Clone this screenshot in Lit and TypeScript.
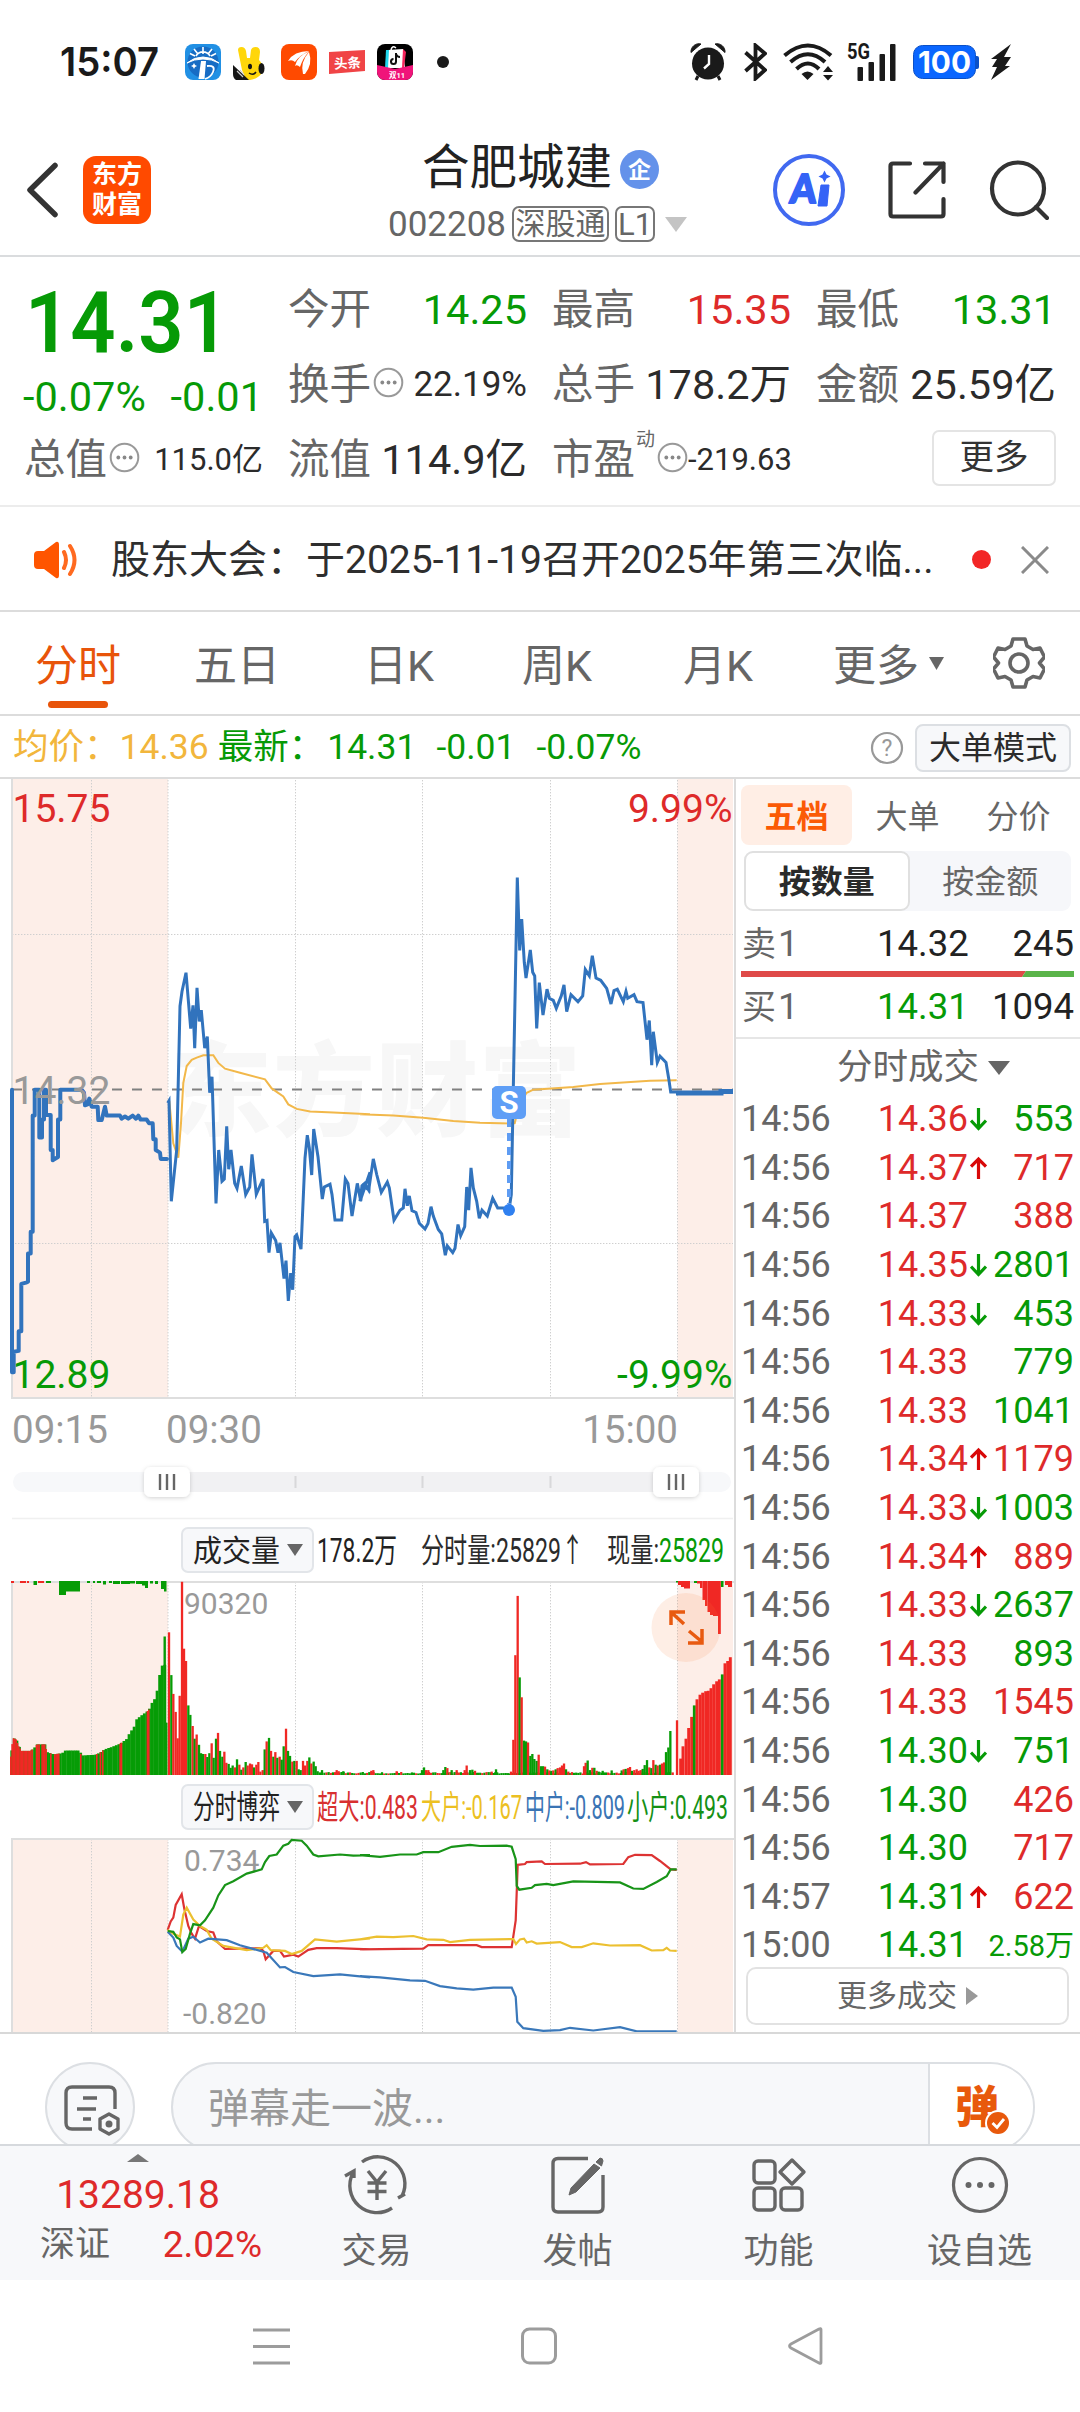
import { LitElement, html, svg, css } from "lit";
import { customElement } from "lit/decorators.js";

type Pts = number[];

/* Turns a flat list of sampled x,y pairs into a path in chart units. */
const line = (pts: Pts, ox: number, oy: number, sy: number) => {
  let d = "";
  for (let i = 0; i < pts.length; i += 2) {
    d += `${i ? "L" : "M"}${(ox + pts[i] / 3).toFixed(1)} ${(oy + pts[i + 1] / sy).toFixed(1)}`;
  }
  return d;
};

/* ---- price chart: origin is the chart's top-left ---- */
const PRE = [36,715,36,1348,41,1348,41,1302,56,1300,56,1256,64,1256,64,1150,78,1147,84,1145,84,1082,92,1082,92,1033,98,1033,98,773,104,773,104,715,118,715,118,822,126,822,126,782,132,782,132,715,138,715,138,772,152,772,152,850,158,850,158,873,174,866,174,782,181,782,181,715,245,715,252,722,255,750,263,748,268,735,275,753,293,753,295,783,305,783,315,753,320,773,360,773,365,780,375,775,385,780,398,773,408,780,415,773,422,782,440,782,447,790,458,790,460,826,467,826,467,850,480,856,482,870,501,870];
const DAY_A = [503,745,507,740,514,965,530,850,540,528,546,495,558,453,572,578,579,526,584,622,591,487,598,562,604,537,614,622,622,596,629,722,636,686,648,970,656,850,666,920,673,915,680,797,686,893,693,850,704,925,711,936,724,886,737,950,749,933,756,860,769,949,789,915,794,1010,801,1008,807,1080,814,1036,827,1053,834,1080,840,1058,852,1138,858,1098,865,1188,872,1126,878,1163,885,1044,890,1040,903,1072,915,868,922,817,928,845,935,906,941,803,954,865,967,960,973,933,990,927,996,950,1005,1007,1025,1007,1036,915,1044,925,1056,998,1072,925,1082,964,1090,930,1107,940,1110,900];
const DAY_B = [0,965,6,930,14,925,26,940,40,870,50,905,64,945,82,922,88,935,102,1007,120,985,130,980,135,937,142,975,148,953,156,986,168,990,178,1014,195,1027,204,1015,213,977,220,998,235,1028,245,1038,256,1086,262,1065,278,1080,285,1070,294,1017,302,1042,314,1022,320,933,326,985,333,890,340,935,350,965,358,1003,366,985,382,998,398,958,413,980,430,980,446,988,454,950,472,240,479,403,485,333,493,430,498,465,511,402,518,452,524,460,530,578,538,475,549,548,561,490,568,510,580,515,589,533,604,505,612,480,620,540,633,502,654,518,668,505,676,446,688,460,697,415,708,465,722,470,740,488,753,523,762,493,772,490,790,518,798,495,803,510,822,502,831,518,849,520,861,603,868,560,875,660,880,585,892,654,900,640,918,654,926,690,932,720,948,720];
const AVG_A = [508,740,520,835,535,867,543,790,550,700,560,662,575,648,590,643,610,638,640,638,655,655,675,668,720,677,795,692,815,712,850,730,865,748,890,758,930,764,1000,766,1110,770];
const AVG_B = [0,770,100,773,190,778,280,785,360,789,450,791,464,790,474,760,485,738,500,722,520,715,640,709,720,702,870,695,950,694];

/* ---- net-flow chart ---- */
const SMALL_A = [503,1283,520,1285,530,1300,540,1305,547,1338,557,1330,570,1290,580,1265,600,1268,615,1255,640,1222,655,1190,675,1163,700,1153,740,1133,785,1122,795,1103,808,1087,830,1083,850,1060,865,1055,875,1045,905,1047,920,1060,940,1083,955,1088,1020,1083,1060,1086,1110,1085];
const SMALL_B = [0,1085,60,1089,120,1083,170,1083,190,1077,235,1077,275,1063,330,1058,360,1061,440,1060,455,1063,467,1095,470,1165,478,1175,515,1170,525,1163,560,1160,580,1163,640,1153,780,1156,820,1172,850,1173,890,1155,920,1140,932,1122,950,1122];
const HUGE_A = [503,1280,512,1258,520,1248,527,1215,545,1187,553,1225,565,1270,575,1290,585,1303,597,1270,620,1283,640,1287,650,1310,675,1330,780,1328,790,1335,797,1357,820,1335,840,1335,852,1350,880,1345,895,1350,925,1332,950,1328,1010,1328,1110,1331];
const HUGE_B = [0,1331,190,1329,205,1320,350,1320,365,1325,455,1325,467,1255,473,1110,495,1108,500,1103,545,1101,555,1108,660,1107,678,1103,690,1109,790,1108,805,1090,825,1084,875,1085,900,1100,932,1122,950,1123];
const BIG_A = [503,1280,520,1290,540,1297,550,1240,560,1222,580,1253,600,1270,620,1280,635,1303,670,1322,740,1333,790,1327,800,1320,812,1333,855,1335,875,1343,905,1335,945,1305,1010,1311,1110,1302];
const BIG_B = [0,1305,50,1298,100,1299,160,1296,200,1305,250,1306,270,1312,330,1306,460,1304,468,1317,480,1305,492,1303,500,1313,515,1310,530,1316,600,1312,635,1325,665,1325,700,1315,750,1321,840,1320,875,1334,910,1333,920,1327,930,1334,950,1335];
const MID_A = [503,1285,520,1300,530,1322,547,1337,565,1303,580,1298,600,1313,625,1303,680,1307,720,1320,800,1340,840,1378,855,1377,880,1390,940,1401,1020,1396,1110,1404];
const MID_B = [0,1401,60,1404,150,1412,195,1413,240,1427,290,1433,340,1436,400,1431,455,1431,467,1455,472,1520,490,1537,550,1544,600,1542,630,1536,700,1543,780,1534,830,1545,950,1545];

/* ---- volume bars: [x, top, 1 = up | 0 = down] ---- */
const PRE_TOP = [31,835,38,778,48,782,56,800,64,812,90,812,100,806,110,795,135,795,140,815,160,821,185,818,195,811,238,811,244,824,285,822,300,816,312,808,330,803,360,793,380,780,388,764,400,752,408,730,425,718,445,706,455,686,463,676,470,655,478,612,486,587];
const RED_RANGES = [[30,98],[107,116],[124,138],[150,154],[162,178],[240,244],[288,292],[299,303],[306,310],[358,364],[440,448]];
const V_A: [number, number, number][] = [[507,502,1],[514,614,0],[520,663,1],[527,710,1],[533,779,1],[539,668,1],[546,370,1],[552,545,1],[558,577,1],[565,693,0],[571,718,0],[578,747,1],[584,780,0],[590,769,1],[597,796,0],[603,818,0],[609,820,0],[616,820,1],[622,828,0],[628,818,0],[635,792,1],[641,830,0],[648,780,0],[654,765,1],[660,812,0],[667,827,0],[673,814,1],[679,843,1],[686,846,0],[692,856,0],[698,850,0],[705,855,1],[711,834,0],[718,848,1],[724,861,0],[730,855,1],[737,841,0],[743,850,1],[750,845,1],[756,847,1],[762,855,0],[769,848,1],[775,841,1],[781,866,1],[788,862,1],[794,808,0],[800,787,1],[807,778,0],[813,812,1],[820,827,0],[826,815,1],[832,830,0],[839,827,1],[845,835,0],[851,800,0],[858,754,1],[864,812,0],[870,825,0],[877,840,1],[883,838,0],[890,838,1],[896,860,0],[902,862,0],[909,838,1],[915,850,1],[922,838,1],[928,829,0],[934,845,1],[941,840,0],[947,852,0],[953,865,0],[960,868,0],[966,862,0],[1010,862,1],[1016,865,1],[1030,865,0]];
const V_B: [number, number, number][] = [[34,864,1],[40,862,1],[110,865,1],[186,862,0],[192,855,0],[198,862,1],[205,862,1],[250,862,0],[256,854,0],[262,857,1],[275,862,0],[290,862,1],[314,862,1],[320,850,1],[330,862,0],[337,861,0],[345,864,1],[395,866,1],[408,860,0],[453,866,1],[460,783,1],[466,562,1],[473,407,1],[479,620,0],[485,672,1],[492,785,0],[498,787,0],[504,790,1],[511,825,0],[517,820,0],[523,833,0],[530,838,0],[536,822,1],[543,852,0],[549,852,0],[555,853,1],[562,860,0],[568,863,1],[574,864,0],[580,863,1],[587,860,0],[593,857,1],[600,855,1],[606,850,1],[612,845,1],[618,860,0],[625,866,1],[672,852,1],[677,843,1],[683,837,0],[690,862,0],[697,856,1],[703,856,0],[710,864,1],[716,866,0],[728,864,0],[755,863,0],[785,863,0],[791,860,1],[797,859,0],[804,857,1],[810,854,1],[816,864,0],[823,862,1],[830,860,1],[836,864,1],[842,862,1],[848,859,0],[854,849,0],[861,836,0],[868,855,1],[874,857,0],[880,836,1],[887,848,0],[893,850,1],[900,848,0],[906,845,1],[912,842,1],[918,815,0],[925,803,0],[931,760,0],[938,868,1],[951,732,1],[961,832,1],[968,800,1],[977,780,1],[985,752,1],[994,723,1],[1002,693,0],[1010,677,1],[1019,665,1],[1027,660,1],[1036,656,1],[1044,655,1],[1052,648,1],[1060,638,1],[1069,630,1],[1077,625,1],[1086,612,0],[1094,583,1],[1102,577,1],[1110,567,1]];
/* order imbalance, hanging from the top edge: [x0, x1, height, up] */
const HANG: [number, number, number, number][] = [[11,14,2,1],[20,26,2,1],[27,29,2,1],[33.5,37,4,0],[38,44,2,1],[46,51,2,0],[59,66,14,0],[66,80,10.5,0],[87,90,2,0],[93,95,2,0],[97,101,2,0],[103,106,3.5,0],[109,112,2,0],[113,120,3,0],[121,130,3,0],[130,135,2.5,0],[136,142,3,0],[142,145,4.5,0],[145,148,7,0],[150,153,2.5,0],[155,158,3,0],[161,164,8,0],[164,166.5,10.5,0],[676,678,1.5,0],[678,681,4,1],[681,684,6,1],[684,690,7.5,1],[694,697,2,0],[697,700,2.5,1],[700,702.5,7,1],[702.5,705,19,1],[705,707.5,25,1],[707.5,710,31,1],[710,713,34,1],[713,718,35,1],[718,720.8,53,1],[721,723.5,6,0],[725,728,4,1],[728,732,6,1]];

const preHeight = (x: number) => {
  for (let i = 2; i < PRE_TOP.length; i += 2) {
    if (x <= PRE_TOP[i]) {
      const t = (x - PRE_TOP[i - 2]) / (PRE_TOP[i] - PRE_TOP[i - 2]);
      return PRE_TOP[i - 1] + t * (PRE_TOP[i + 1] - PRE_TOP[i - 1]);
    }
  }
  return 587;
};

const bar = (x: number, w: number, top: number, up: boolean | number) => {
  const y = (top - 368) / 2.613;
  return svg`<rect x=${x.toFixed(2)} y=${y.toFixed(1)} width=${w} height=${(194 - y).toFixed(1)} fill=${up ? "#f02824" : "#069c06"}></rect>`;
};

const fit = (text: string, w: number, size: number, fill: string, weight = 400) => html`<svg class="fit" width=${w} height=${Math.round(size * 1.3)}><text x="0" y=${(size * 1.005).toFixed(1)} font-size=${size} fill=${fill} font-weight=${weight} textLength=${w} lengthAdjust="spacingAndGlyphs">${text}</text></svg>`;

const GREEN = "#069a06";
const RED = "#de2a2a";

const TRADES: [string, string, number, string, string, number][] = [
  ["14:56", "14.36", 1, "d", "553", 0],
  ["14:56", "14.37", 1, "u", "717", 1],
  ["14:56", "14.37", 1, "", "388", 1],
  ["14:56", "14.35", 1, "d", "2801", 0],
  ["14:56", "14.33", 1, "d", "453", 0],
  ["14:56", "14.33", 1, "", "779", 0],
  ["14:56", "14.33", 1, "", "1041", 0],
  ["14:56", "14.34", 1, "u", "1179", 1],
  ["14:56", "14.33", 1, "d", "1003", 0],
  ["14:56", "14.34", 1, "u", "889", 1],
  ["14:56", "14.33", 1, "d", "2637", 0],
  ["14:56", "14.33", 1, "", "893", 0],
  ["14:56", "14.33", 1, "", "1545", 1],
  ["14:56", "14.30", 0, "d", "751", 0],
  ["14:56", "14.30", 0, "", "426", 1],
  ["14:56", "14.30", 0, "", "717", 1],
  ["14:57", "14.31", 0, "u", "622", 1],
  ["15:00", "14.31", 0, "", "2.58万", 0],
];

const arrow = (dir: string) =>
  dir === "d"
    ? html`<svg width="17" height="24" viewBox="0 0 17 24"><path d="M8.5 1V21M1 13.5L8.5 21.5L16 13.5" fill="none" stroke="#069a06" stroke-width="3.2"/></svg>`
    : dir === "u"
    ? html`<svg width="17" height="24" viewBox="0 0 17 24"><path d="M8.5 23V3M1 10.5L8.5 3L16 10.5" fill="none" stroke="#d80808" stroke-width="3.2"/></svg>`
    : "";

const dots = html`<svg class="dots" width="31" height="31" viewBox="0 0 31 31"><circle cx="15.5" cy="15.5" r="13.8" fill="none" stroke="#999" stroke-width="2"/><g fill="#888"><circle cx="9.3" cy="15.5" r="1.9"/><circle cx="15.5" cy="15.5" r="1.9"/><circle cx="21.7" cy="15.5" r="1.9"/></g></svg>`;

const grid = (h: number) => svg`<g stroke="#cfcfcf" stroke-width="1" stroke-dasharray="1.4 1.6">
  ${[91.5, 168, 295.5, 422.5, 550.5, 677.5].map((x) => svg`<line x1=${x} x2=${x} y1="1" y2=${h}></line>`)}</g>`;

@customElement("app-root")
export class AppRoot extends LitElement {
  static styles = css`
    :host { display: block; width: 1080px; height: 2412px; overflow: hidden; background: #fff; color: #333;
      font-family: Roboto, "Noto Sans CJK SC", sans-serif; font-size: 36px; line-height: 1; }
    * { box-sizing: border-box; }
    svg { display: block; flex: none; }
    .fit, .over { overflow: visible; }
    .page { display: flex; flex-direction: column; height: 2412px; }
    .page > * { flex: none; }
    .row { display: flex; align-items: center; white-space: nowrap; }
    .g { color: #069a06; } .r { color: #de2a2a; }

    .status { height: 124px; padding: 0 68px 0 60px; }
    .clock { width: 125px; font: 600 41px/1 Inter, Roboto, sans-serif; color: #1a1a1a; }
    .apps { gap: 12px; }
    .sys { margin-left: auto; }
    .head { height: 133px; border-bottom: 2px solid #dadcde; padding-left: 26px; }
    .logo { margin-left: 25px; width: 68px; height: 68px; border-radius: 13px; background: #ff4a00; color: #fff;
      font-size: 25px; font-weight: 700; line-height: 30px; text-align: center; padding-top: 4px; white-space: normal; }
    .titles { width: 350px; margin: 9px 0 0 212px; display: flex; flex-direction: column; }
    .name { height: 58px; padding-left: 59px; font-size: 47.5px; color: #222; }
    .code { height: 50px; padding: 2px 0 0 25px; color: #666; font-size: 35px; }
    .tag { border: 2px solid #777; border-radius: 7px; height: 36px; margin-left: 6px; display: flex; align-items: center; justify-content: center; font-size: 30px; }
    .t1 { width: 97px; } .t2 { width: 40px; font-size: 31px; }
    .tri { width: 0; height: 0; border: 11px solid transparent; border-top: 15px solid #c4c4c4; border-bottom: 0; margin-left: 10px; }
    .headicons { margin-left: 60px; gap: 43px; }

    .quote { height: 250px; padding: 15px 0 0 24px; border-bottom: 2px solid #ececec;
      display: grid; grid-template-columns: 239px 239px 239px 240px; column-gap: 25px; grid-template-rows: 75px 75px 75px; }
    .big { grid-row: 1 / 3; display: flex; flex-direction: column; }
    .price { height: 98px; padding: 2px 0 0 1px; }
    .chg { height: 52px; font-size: 41.5px; display: flex; align-items: center; justify-content: space-between; padding-top: 1px; }
    .chg span:first-child { margin-left: -1px; }
    .cell { display: flex; align-items: center; font-size: 41.5px; white-space: nowrap; }
    .cell .k { color: #666; }
    .cell .v { margin-left: auto; color: #2b2b2b; }
    .cell .v.g { color: #069a06; } .cell .v.r { color: #de2a2a; }
    .v.s { font-size: 35px; } .v.xs { font-size: 31px; }
    .dots { margin: -5px 0 0 2px; }
    .sup { font-size: 19px; color: #666; margin: -40px 0 0 1px; }
    .more { margin: -4px 0 0 auto; width: 124px; height: 56px; border: 2px solid #e4e4e4; border-radius: 7px; font-size: 34.5px; color: #333; display: flex; align-items: center; justify-content: center; }

    .notice { height: 105px; border-bottom: 2px solid #dcdcdc; padding: 2px 0 0 33px; color: #2e2e2e; font-size: 39px; }
    .notice .msg { margin-left: 32px; width: 861px; padding-top: 1px; }
    .reddot { width: 19px; height: 19px; border-radius: 50%; background: #f22626; }
    .close { margin-left: 30px; }

    .tabs { height: 104px; border-bottom: 2px solid #dcdcdc; color: #666; font-size: 43px; padding-left: 35px; }
    .tab { display: flex; flex-direction: column; align-items: center; height: 102px; padding-top: 33px; flex: none; }
    .tab.on { color: #e8540a; width: 86px; }
    .tab i { width: 60px; height: 7px; border-radius: 4px; background: #e8540a; margin-top: 13px; }

    .avg { height: 63px; border-bottom: 2px solid #dcdcdc; font-size: 35.5px; padding: 2px 9px 0 13px; }
    .avg .y { color: #f2b63c; }
    .avg .n { margin-left: 9px; } .avg .p { margin-left: 3px; } .avg .q { margin-left: 20px; }
    .avg .q + .q { margin-left: 21px; }
    .help { margin-left: auto; }
    .mode { width: 156px; height: 48px; border: 2px solid #dcdfe3; border-radius: 8px; background: #f7f8fa; color: #2b2b2b; font-size: 32px; display: flex; align-items: center; justify-content: center; margin-left: 11px; }

    .main { display: flex; height: 1255px; border-bottom: 2px solid #d8d8d8; overflow: hidden; }
    .left { width: 734px; display: flex; flex-direction: column; }
    .left > * { flex: none; }
    .strip { height: 62px; padding-left: 181px; }
    .ind { width: 133px; height: 46px; border: 2px solid #e2e5e9; border-radius: 7px; background: #f7f8fa; display: flex; align-items: center; justify-content: space-between; padding: 0 9px 0 10px; }
    .ind b { border: 8px solid transparent; border-top: 12px solid #666; border-bottom: 0; }
    .s3 { margin-left: 3px; } .s2 { margin-left: 2px; } .s24 { margin-left: 24px; }

    .right { width: 346px; border-left: 2px solid #dcdcdc; display: flex; flex-direction: column; }
    .right > * { flex: none; }
    .rtabs { height: 66px; margin: 6px 0 0 5px; align-items: flex-start; font-size: 32px; color: #666; }
    .rtabs span { width: 111px; height: 60px; border-radius: 8px; display: flex; align-items: center; justify-content: center; padding-top: 3px; }
    .rtabs .on { background: #ffeee5; color: #fb5a06; font-weight: 700; }
    .seg { width: 327px; height: 60px; margin-left: 8px; background: #f6f7fa; border-radius: 9px; font-size: 32px; color: #666; }
    .seg span { flex: 1; height: 60px; display: flex; align-items: center; justify-content: center; padding-top: 2px; }
    .seg .on { border: 2px solid #e0e0e0; border-radius: 9px; background: #fff; color: #2a2a2a; font-weight: 700; }
    .lvl { height: 60px; padding: 0 6px; font-size: 36.5px; color: #222; }
    .lvl.sell { height: 56px; margin-top: 4px; padding-top: 2px; }
    .lvl .k { width: 135px; color: #666; }
    .lvl .v { margin-left: auto; }
    .lvl .g { color: #069a06; }
    .lvl .k em { font-style: normal; font-size: 34px; margin-right: 2px; }
    .rt { height: 58px; border-top: 2px solid #e6e6e6; font-size: 35.5px; color: #666; gap: 9px; padding: 2px 0 0 101px; }
    .rt b { border: 11px solid transparent; border-top: 14px solid #666; border-bottom: 0; }
    .tr { height: 48.6px; padding: 0 6px 0 5px; font-size: 36px; color: #666; }
    .tr .p { margin-left: 47px; width: 92px; }
    .tr .v { margin-left: auto; }
    .tr .w { font-size: 29px; padding-top: 3px; }
    .all { width: 323px; height: 58px; margin: -3px 0 0 10px; border: 2px solid #e2e2e2; border-radius: 10px; font-size: 30px; color: #666; display: flex; align-items: center; justify-content: center; gap: 9px; padding-top: 1px; }
    .all b { border: 9px solid transparent; border-left: 12px solid #999; border-right: 0; }

    .danmu { height: 110px; padding: 28px 0 0 45px; overflow: hidden; display: flex; align-items: flex-start; }
    .round { width: 90px; height: 90px; border: 2px solid #dcdfe3; border-radius: 50%; background: #f7f8fa; padding: 19px 0 0 17px; flex: none; }
    .pill { margin-left: 36px; width: 864px; height: 90px; border: 2px solid #dcdfe3; border-radius: 45px; overflow: hidden; background: #f7f8fa; display: flex; align-items: center; color: #999; font-size: 41px; flex: none; }
    .pill .in { width: 755px; padding: 5px 0 0 35px; }
    .pill .send { flex: 1; height: 90px; background: #fff; border-left: 2px solid #dcdfe3; padding: 21px 0 0 25px; }

    .dock { height: 136px; background: #f7f8fa; border-top: 2px solid #d6d9dd; display: flex; }
    .idx { width: 276px; display: flex; flex-direction: column; align-items: center; padding-top: 8px; color: #666; }
    .idx b { border: 11px solid transparent; border-bottom: 8px solid #777; border-top: 0; }
    .idx .n { font-size: 39px; color: #de2a2a; margin-top: 14px; }
    .idx .l { width: 222px; display: flex; justify-content: space-between; align-items: center; font-size: 35px; margin: 11px 0 0 26px; }
    .idx .l .r { font-size: 37px; }
    .item { width: 201px; display: flex; flex-direction: column; align-items: center; color: #666; font-size: 35px; padding-top: 8px; gap: 18px; }
    .nav { height: 132px; justify-content: center; gap: 231px; padding-right: 4px; }
    .m10 { margin-left: 10px; } .m14 { margin-left: 14px; } .m16 { margin-left: 16px; } .m17 { margin-left: 17px; } .m18 { margin-left: 18px; } .m8 { margin-left: 8px; }
    .m24 { margin-left: 24px; } .m72 { margin-left: 73px; } .m83 { margin-left: 84px; } .m86 { margin-left: 88px; } .m89 { margin-left: 91px; } .m77 { margin-left: 80px; } .m49 { margin-left: 49px; } .m26 { margin-left: 23px; }
  `;

  private status() {
    const k = "#1a1a1a";
    return html`<div class="row status">
      <div class="clock">${fit("15:07", 99, 40, k, 600)}</div>
      <div class="row apps">
        <svg width="36" height="36" viewBox="0 0 36 36"><rect width="36" height="36" rx="8" fill="#2190e4"/><circle cx="18" cy="18" r="15.5" fill="#176cc4"/><path d="M2 19Q9 13 18 13T34 19Q27 15 18 15T2 19Z" fill="#fff" stroke="#fff"/><path d="M11 12a8 8 0 0 1 14 0M18 10V3M13 10L9 5M23 10L27 5M10 12L5 9.500M26 12L31 9.500" fill="none" stroke="#fff" stroke-width="1.600"/><path d="M16 17H21L19.500 35H13.500Z" fill="#fff"/><path d="M22 22Q31 21 28 28Q26 33 20 35" fill="none" stroke="#fff" stroke-width="1.800"/><path d="M9 19L10 21L12 22L10 23L9 25L8 23L6 22L8 21Z" fill="#fff"/></svg>
        <svg width="36" height="36" viewBox="0 0 36 36"><path d="M5 6Q5 3 8.500 3Q12 3 13 7L14 14H17L18 6Q19 3 22.500 3Q27 3 27 8L26 16Q31 21 30 27Q26 35 17 36H13L9 26Z" fill="#ffd60a"/><path d="M0 21L16 36H3Q0 34 0 30Z" fill="#161616"/><ellipse cx="28.500" cy="24.500" rx="3" ry="5.500" fill="#161616"/><ellipse cx="17" cy="22.500" rx="2" ry="2.800" fill="#161616"/><path d="M16 29Q20 32 23 28" fill="none" stroke="#161616" stroke-width="1.500"/><path d="M4 27L10 33M7 26L11 31" stroke="#ccc" stroke-width="1.200"/></svg>
        <svg width="36" height="36" viewBox="0 0 36 36"><rect width="36" height="36" rx="8" fill="#ff4a00"/><path d="M7 17Q13 7 28 7Q19 11 14 18Q11 15 7 17Z M14 22Q16 12 28 7.500Q22 14 19 23Q16 20 14 22Z M22 30Q19 18 28 8Q32 20 24 30Z" fill="#fff"/></svg>
        <svg width="36" height="36" viewBox="0 0 36 36"><path d="M0 8L36 6V27L0 30Z" fill="#f04446"/><text x="5" y="24" font-size="13.500" font-weight="700" fill="#fff" transform="rotate(-3 18 18)">头条</text></svg>
        <svg width="36" height="36" viewBox="0 0 36 36"><defs><clipPath id="c"><rect width="36" height="36" rx="8"/></clipPath></defs><g clip-path="url(#c)"><rect width="36" height="36" fill="#000"/><path d="M11 6L26 5L28 24H9Z" fill="#fff"/><path d="M9 6L12 6L11 24H8Z" fill="#20d5ec"/><path d="M26 5L29 8L27 24H25Z" fill="#f5245c"/><path d="M14 6Q15 1 19 4" fill="none" stroke="#fff" stroke-width="1.500"/><path d="M19 9V17.500A2.500 2.500 0 1 1 16.500 15M19 10Q20 13 23 13" fill="none" stroke="#111" stroke-width="2"/><path d="M0 21L18 25L36 21V36H0Z" fill="#f0147a"/><text x="12" y="34" font-size="7.500" font-weight="700" fill="#fff">双11</text></g></svg>
      </div>
      <svg class="m24" width="12" height="12"><circle cx="6" cy="6" r="6" fill=${k}></circle></svg>
      <div class="row sys">
        <svg width="36" height="38" viewBox="0 0 36 38"><circle cx="18" cy="20.500" r="16" fill=${k}></circle><path d="M1 9.500A8 8 0 0 1 11 1Z M35 9.500A8 8 0 0 0 25 1Z" fill=${k} stroke=${k} stroke-width="1"></path><path d="M8 33L6 37M28 33L30 37" stroke=${k} stroke-width="3"></path><path d="M19 12V21L14 25.500" fill="none" stroke="#fff" stroke-width="2.400"></path></svg>
        <svg class="m18" width="23" height="38" viewBox="0 0 23 38"><path d="M1.500 9.500L21 27L11.500 35.500V2.500L21 10.500L1.500 28" fill="none" stroke=${k} stroke-width="3.800"></path></svg>
        <svg class="m16" width="50" height="38" viewBox="0 0 50 38"><g fill="none" stroke=${k} stroke-width="4"><path d="M1.500 12.500Q25 -7.500 48 12.500"></path><path d="M7.500 19Q25 3.500 42 19"></path><path d="M13.500 26Q25 15 36 26"></path></g><path d="M18.500 31Q24.500 26 30.500 31L24.500 37Z" fill=${k}></path><path d="M40 29L45 23L50 29ZM40 32H50L45 37.500Z" fill=${k}></path></svg>
        <svg class="m14 over" width="49" height="38" viewBox="0 0 49 38"><text x="0" y="16" font-size="21.500" font-weight="700" fill=${k} textLength="23" lengthAdjust="spacingAndGlyphs">5G</text><g fill=${k}><rect x="10.500" y="24" width="5.500" height="14" rx="1"></rect><rect x="21.500" y="19" width="5.500" height="19" rx="1"></rect><rect x="32.500" y="11" width="5.500" height="27" rx="1"></rect><rect x="43" y="1" width="5.500" height="37" rx="1"></rect></g></svg>
        <svg class="m17" width="67" height="36" viewBox="0 0 67 36"><rect x="60" y="12" width="6" height="13" rx="2" fill="#0a50c8"/><rect x="0.500" y="1.500" width="62" height="33" rx="9" fill="#0a66ff" stroke="#0a50c8"/><text x="5" y="28.700" font-family="Inter, Roboto" font-size="30.500" font-weight="700" fill="#fff" textLength="53" lengthAdjust="spacingAndGlyphs">100</text></svg>
        <svg class="m10" width="22" height="38" viewBox="0 0 22 38"><path d="M21 1L1 16H7L2 24L7 24L1 37L20 23H15L21 14L14 14Z" fill=${k}></path></svg>
      </div>
    </div>`;
  }

  private header() {
    return html`<div class="row head">
      <svg width="32" height="56" viewBox="0 0 32 56"><path d="M29 3.500L4 28L29 52.500" fill="none" stroke="#333" stroke-width="5.500" stroke-linecap="round" stroke-linejoin="round"/></svg>
      <div class="logo">东方<br>财富</div>
      <div class="titles">
        <div class="row name"><span>合肥城建</span>
          <svg class="m8" width="39" height="39" viewBox="0 0 39 39"><circle cx="19.500" cy="19.500" r="19.500" fill="#6492ea"/><text x="8" y="27.500" font-size="23" font-weight="700" fill="#fff">企</text></svg></div>
        <div class="row code"><span>002208</span><span class="tag t1">深股通</span><span class="tag t2">L1</span><span class="tri"></span></div>
      </div>
      <div class="row headicons">
        <svg width="72" height="72" viewBox="0 0 72 72"><circle cx="36" cy="36" r="34" fill="#fff" stroke="#4169f0" stroke-width="4"/><path d="M48 31H56L54 52H45Z" fill="#3563f6" stroke="#3563f6" stroke-linejoin="round"/><path d="M51.500 16.500L53.500 20.500L57.500 22.500L53.500 24.500L51.500 28.500L49.500 24.500L45.500 22.500L49.500 20.500Z" fill="#3563f6"/><text x="17" y="49" font-size="40" font-family="Lato, Roboto" font-weight="900" fill="#3563f6" stroke="#3563f6" stroke-width="2" stroke-linejoin="round" textLength="26" lengthAdjust="spacingAndGlyphs" transform="translate(3.500 0) skewX(-5)">A</text></svg>
        <svg width="58" height="58" viewBox="0 0 58 58"><g fill="none" stroke="#333" stroke-width="4.200" stroke-linecap="round" stroke-linejoin="round"><path d="M22 2.500H5Q2.500 2.500 2.500 5V53Q2.500 55.500 5 55.500H53Q55.500 55.500 55.500 53V38"/><path d="M37 2.500H55.500V21M55.500 2.500L27.500 31.500"/></g></svg>
        <svg width="60" height="60" viewBox="0 0 60 60"><g fill="none" stroke="#333" stroke-width="4.200" stroke-linecap="round"><circle cx="29" cy="28.500" r="26"/><path d="M47 47L58 58"/></g></svg>
      </div>
    </div>`;
  }

  private quote() {
    const cell = (k: string, v: string, c = "", extra: unknown = "") =>
      html`<div class="cell"><span class="k">${k}</span>${extra}<span class="v ${c}">${v}</span></div>`;
    return html`<div class="quote">
      <div class="big"><div class="row price">${fit("14.31", 204, 86, "#069a06", 600)}</div><div class="chg g"><span>-0.07%</span><span>-0.01</span></div></div>
      ${cell("今开", "14.25", "g")}${cell("最高", "15.35", "r")}${cell("最低", "13.31", "g")}
      ${cell("换手", "22.19%", "s", dots)}${cell("总手", "178.2万")}${cell("金额", "25.59亿")}
      ${cell("总值", "115.0亿", "xs", dots)}${cell("流值", "114.9亿")}
      ${cell("市盈", "-219.63", "xs", html`<span class="sup">动</span>${dots}`)}
      <div class="cell"><span class="more">更多</span></div>
    </div>`;
  }

  private bars() {
    const out: unknown[] = [];
    for (let x = 31; x < 490; x += 7.65) {
      out.push(bar(x / 3, 2.9, preHeight(x + 3), 0));
    }
    for (const [a, b] of RED_RANGES) {
      for (let x = a; x < b; x += 4) out.push(bar(x / 3, 1.6, preHeight(x + 2), 1));
    }
    out.push(bar(163.5, 2.4, 513, 0), bar(166, 1.5, 738, 0));
    for (let x = 970; x < 2010; x += 6.4) {
      const n = Math.abs(Math.sin(x * 12.9898) * 43758.5453) % 1;
      out.push(bar(x / 3, 2.2, 871 - n * 4, Math.floor(n * 97) % 5 < 2 ? 1 : 0));
    }
    for (const [x, t, c] of V_A) out.push(bar((x - 3.4) / 3, 2.3, t, c));
    for (const [x, t, c] of V_B) out.push(bar(360 + (x - 3.4) / 3, x > 955 ? 2.9 : 2.3, t, c));
    return out;
  }

  private charts() {
    const y0 = -8.5, s = 2.24;
    const flow = (a: Pts, b: Pts, c: string) => svg`<path d=${line(a, 0, -398, 2.613) + line(b, 360, -398, 2.613).replace("M", "L")} fill="none" stroke=${c} stroke-width="2.2"></path>`;
    return html`<div class="left">
      <svg width="734" height="690" viewBox="0 0 734 690">
        <rect x="12" y="0" width="156" height="619" fill="#fdeee8"/><rect x="677.500" y="0" width="55.500" height="619" fill="#fdeee8"/>
        <text x="170" y="349" font-size="102" font-weight="900" fill="#f7f7f7" textLength="411">东方财富</text>
        ${grid(619)}
        <path d="M12 155.500H733M12 464.500H733" stroke="#cfcfcf" stroke-dasharray="1.400 1.600"/>
        <path d="M12 0V619M11 619H734" fill="none" stroke="#dedede" stroke-width="2"/>
        <path d="M12 310.500H733" stroke="#808080" stroke-width="2" stroke-dasharray="10 10" />
        <g font-size="39"><text x="12.500" y="42.500" fill=${RED}>15.75</text><text x="12.500" y="608.500" fill=${GREEN}>12.89</text>
          <text x="732.500" y="42.500" fill=${RED} text-anchor="end">9.99%</text><text x="732.500" y="608.500" fill=${GREEN} text-anchor="end">-9.99%</text></g>
        <path d=${line(AVG_A, 0, y0, s) + line(AVG_B, 360, y0, s).replace("M", "L")} fill="none" stroke="#f2b84a" stroke-width="2"></path>
        <path d=${line(PRE, 0, y0, s)} fill="none" stroke="#3173bd" stroke-width="4" stroke-linecap="round" stroke-linejoin="round"></path>
        <path d=${line(DAY_A, 0, y0, s) + line(DAY_B, 360, y0, s).replace("M", "L")} fill="none" stroke="#3173bd" stroke-width="3"></path>
        <path d="M676 314H721V312.500H733" fill="none" stroke="#3173bd" stroke-width="5"/>
        <text x="12.500" y="325" font-size="39" fill="#999">14.32</text>
        <path d="M509 340V425" stroke="#5e9cf3" stroke-width="4" stroke-dasharray="8 6"/><circle cx="509" cy="431" r="6" fill="#2f80f0"/>
        <rect x="492" y="307" width="34" height="33" rx="5" fill="#5e9ef6"/><text x="509" y="334" font-size="31" font-weight="700" fill="#fff" text-anchor="middle">S</text>
        <g font-size="38.500" fill="#999"><text x="12" y="664">09:15</text><text x="166" y="664">09:30</text><text x="678" y="664" text-anchor="end">15:00</text></g>
      </svg>
      <svg class="over" width="734" height="50" viewBox="0 0 734 50">
        <defs><filter id="sh" x="-20%" y="-20%" width="140%" height="150%"><feDropShadow dx="0" dy="1" stdDeviation="2" flood-color="#000" flood-opacity=".18"/></filter></defs>
        <rect x="13" y="3" width="718" height="20" rx="10" fill="#f7f8fa"/><rect x="168" y="3" width="508" height="20" fill="#f1f1f3"/>
        <path d="M295.500 7V19M422.500 7V19M550.500 7V19" stroke="#d8d8da" stroke-width="2"/>
        ${[144, 653].map((x) => svg`<rect x=${x} y="-2" width="46" height="30" rx="7" fill="#fff" filter="url(#sh)"></rect><path d=${`M${x + 16} 5V21M${x + 23} 5V21M${x + 30} 5V21`} stroke="#666" stroke-width="2.4"></path>`)}
        <path d="M12 49.500H733" stroke="#f0f0f0" stroke-width="1.500"/>
      </svg>
      <div class="row strip">
        <span class="ind">${fit("成交量", 87, 30, "#222")}<b></b></span>
        <span class="s3">${fit("178.2万", 80, 32.5, "#222")}</span>
        <span class="s24">${fit("分时量:25829↑", 163, 32.5, "#2b2b2b")}</span>
        <span class="m26">${fit("现量:", 52, 32.5, "#2b2b2b")}</span>${fit("25829", 65, 32.5, GREEN)}
      </div>
      <svg width="734" height="195" viewBox="0 0 734 195">
        <rect x="12" y="0" width="156" height="194" fill="#fdeee8"/><rect x="677.500" y="0" width="55.500" height="194" fill="#fdeee8"/>
        ${grid(194)}
        <path d="M12 194V1H734" fill="none" stroke="#dedede" stroke-width="2"/>
        ${this.bars()}
        ${HANG.map(([a, b, h, u]) => svg`<rect x=${a} y="0" width=${b - a} height=${h} fill=${u ? "#f02824" : "#069c06"}></rect>`)}
        <circle cx="686" cy="46.500" r="34.500" fill="#f97838" fill-opacity=".13"/>
        <path d="M684 43L672 32M671 44V31H685M689 50L701 60M702 48V62H688" fill="none" stroke="#e85a10" stroke-width="3.500"/>
        <text x="184" y="33" font-size="30" fill="#999">90320</text>
      </svg>
      <div class="row strip">
        <span class="ind">${fit("分时博弈", 87, 32, "#222")}<b></b></span>
        <span class="s3">${fit("超大:0.483", 101, 32.5, "#d83030")}</span>
        <span class="s3">${fit("大户:-0.167", 101, 32.5, "#ecc022")}</span>
        <span class="s3">${fit("中户:-0.809", 100, 32.5, "#3a74b4")}</span>
        <span class="s2">${fit("小户:0.493", 101, 32.5, "#149014")}</span>
      </div>
      <svg width="734" height="195" viewBox="0 0 734 195">
        <rect x="12" y="0" width="156" height="195" fill="#fdeee8"/><rect x="677.500" y="0" width="55.500" height="195" fill="#fdeee8"/>
        ${grid(195)}
        <path d="M12 195V1H734" fill="none" stroke="#dedede" stroke-width="2"/>
        <g font-size="30" fill="#999"><text x="184" y="33">0.734</text><text x="183" y="186">-0.820</text></g>
        ${flow(HUGE_A, HUGE_B, "#d33")}${flow(BIG_A, BIG_B, "#ecc030")}${flow(MID_A, MID_B, "#3a78ba")}${flow(SMALL_A, SMALL_B, "#189418")}
      </svg>
    </div>`;
  }

  private side() {
    return html`<div class="right">
      <div class="row rtabs"><span class="on">五档</span><span>大单</span><span>分价</span></div>
      <div class="row seg"><span class="on">按数量</span><span>按金额</span></div>
      <div class="row lvl sell"><span class="k"><em>卖</em>1</span><span>14.32</span><span class="v">245</span></div>
      <svg width="339" height="6" viewBox="0 0 339 6"><path d="M5 0H290L286 6H5Z" fill="#df4a48"/><path d="M290 0H338V6H286Z" fill="#5ab44a"/></svg>
      <div class="row lvl"><span class="k"><em>买</em>1</span><span class="g">14.31</span><span class="v">1094</span></div>
      <div class="row rt"><span>分时成交</span><b></b></div>
      ${TRADES.map(([t, p, pu, d, v, vu]) => html`<div class="row tr"><span>${t}</span><span class="p ${pu ? "r" : "g"}">${p}</span>${arrow(d)}<span class="v ${vu ? "r" : "g"} ${v.includes("万") ? "w" : ""}">${v}</span></div>`)}
      <div class="all"><span>更多成交</span><b></b></div>
    </div>`;
  }

  render() {
    return html`<div class="page">
      ${this.status()}${this.header()}${this.quote()}
      <div class="row notice">
        <svg width="46" height="38" viewBox="0 0 46 38"><path d="M1 14Q1 10 5 10H11L23 1Q26 0 26 4V34Q26 38 23 37L11 28H5Q1 28 1 24Z" fill="#ff5500"/><path d="M31 11Q35 19 31 27M37 5Q46 19 37 33" fill="none" stroke="#ff6a20" stroke-width="4" stroke-linecap="round"/></svg>
        <span class="msg">股东大会：于2025-11-19召开2025年第三次临...</span>
        <span class="reddot"></span>
        <svg class="close" width="28" height="28" viewBox="0 0 28 28"><path d="M1 1L27 27M27 1L1 27" stroke="#8a8a8a" stroke-width="3"/></svg>
      </div>
      <div class="row tabs">
        <span class="tab on">分时<i></i></span>
        <span class="tab m72">五日</span>
        <span class="tab m83">日K</span>
        <span class="tab m86">周K</span>
        <span class="tab m89">月K</span>
        <span class="tab m77">更多</span>
        <svg class="m10" width="15" height="13" viewBox="0 0 15 13"><path d="M0 0H15L7.500 13Z" fill="#666"/></svg>
        <svg class="m49" width="52" height="52" viewBox="0 0 52 52"><path d="M20 2H32L34 9L40 12.500L47 11L51.500 20L46.500 26L51.500 32L47 41L40 39.500L34 43L32 50H20L18 43L12 39.500L5 41L.5 32L5.500 26L.5 20L5 11L12 12.500L18 9Z" fill="none" stroke="#666" stroke-width="3.600" stroke-linejoin="round"/><circle cx="26" cy="26" r="9" fill="none" stroke="#666" stroke-width="3.600"/></svg>
      </div>
      <div class="row avg"><span class="y">均价：</span><span class="y">14.36</span><span class="g n">最新：</span><span class="g p">14.31</span><span class="g q">-0.01</span><span class="g q">-0.07%</span>
        <svg class="help" width="34" height="34" viewBox="0 0 34 34"><circle cx="17" cy="17" r="15" fill="none" stroke="#999" stroke-width="2.200"/><text x="17" y="25" font-size="23" fill="#999" text-anchor="middle">?</text></svg>
        <span class="mode">大单模式</span></div>
      <div class="main">${this.charts()}${this.side()}</div>
      <div class="danmu">
        <div class="round"><svg width="57" height="54" viewBox="0 0 57 54"><g fill="none" stroke="#666" stroke-width="3.400"><path d="M28 46H8Q2 46 2 40V10Q2 4 8 4H45Q51 4 51 10V26"/><path d="M19 15H33M13 26H32M19 36H27"/><path d="M45 31L54 36V46L45 51L36 46V36Z" stroke-linejoin="round"/></g><circle cx="45" cy="41" r="3.500" fill="#666"/></svg></div>
        <div class="pill"><span class="in">弹幕走一波...</span><span class="send"><svg width="56" height="54" viewBox="0 0 56 54"><text x="0" y="40" font-size="44" font-weight="900" fill="#e8590c">弹</text><circle cx="43" cy="40" r="13" fill="#fff"/><circle cx="43" cy="40" r="11" fill="#e8590c"/><path d="M37.500 40L42 44.500L49 36" fill="none" stroke="#fff" stroke-width="2.800"/></svg></span></div>
      </div>
      <div class="dock">
        <div class="idx"><b></b><span class="n">13289.18</span><span class="l"><span>深证</span><span class="r">2.02%</span></span></div>
        <div class="item"><svg width="66" height="62" viewBox="0 0 66 62"><g fill="none" stroke="#666" stroke-width="3.400"><path d="M18 8A27 27 0 0 1 58 42M61 40L54 44"/><path d="M48 54A27 27 0 0 1 9 19M1 22L10 17V24"/><path d="M24 17L33 28L42 17M33 28V46M23.500 29H42.500M23.500 37.500H42.500"/></g></svg><span>交易</span></div>
        <div class="item"><svg width="56" height="62" viewBox="0 0 56 62"><path d="M38 4.500H8Q3 4.500 3 9.500V53Q3 58 8 58H48Q53 58 53 53V21" fill="none" stroke="#666" stroke-width="3.400"/><path d="M44 10L50 14L26 38L19 41L21 34Z M46 8L50 4Q53 4 53 7L51.500 12Z" fill="#666" stroke="#666"/></svg><span>发帖</span></div>
        <div class="item"><svg width="56" height="62" viewBox="0 0 56 62"><g fill="none" stroke="#666" stroke-width="3.400" stroke-linejoin="round"><rect x="3" y="7" width="21" height="22" rx="4"/><rect x="3" y="34" width="21" height="22" rx="4"/><rect x="30" y="34" width="21" height="22" rx="4"/><path d="M41 6L53 18L41 30L29 18Z"/></g></svg><span>功能</span></div>
        <div class="item"><svg width="58" height="62" viewBox="0 0 58 62"><circle cx="29" cy="31" r="26.500" fill="none" stroke="#666" stroke-width="3.200"/><g fill="#666"><circle cx="17.500" cy="31" r="3"/><circle cx="29" cy="31" r="3"/><circle cx="40.500" cy="31" r="3"/></g></svg><span>设自选</span></div>
      </div>
      <div class="row nav">
        <svg width="37" height="38" viewBox="0 0 37 38"><path d="M0 3H37M0 19.500H37M0 36H37" stroke="#9c9c9c" stroke-width="3"/></svg>
        <svg width="36" height="38" viewBox="0 0 36 38"><rect x="1.500" y="2" width="33" height="34" rx="7" fill="none" stroke="#9c9c9c" stroke-width="3"/></svg>
        <svg width="36" height="38" viewBox="0 0 36 38"><path d="M33 2.500V35.500Q33 37 31 36L3 21Q0 19 3 17L31 2Q33 1 33 2.500Z" fill="none" stroke="#9c9c9c" stroke-width="2.800"/></svg>
      </div>
    </div>`;
  }
}
